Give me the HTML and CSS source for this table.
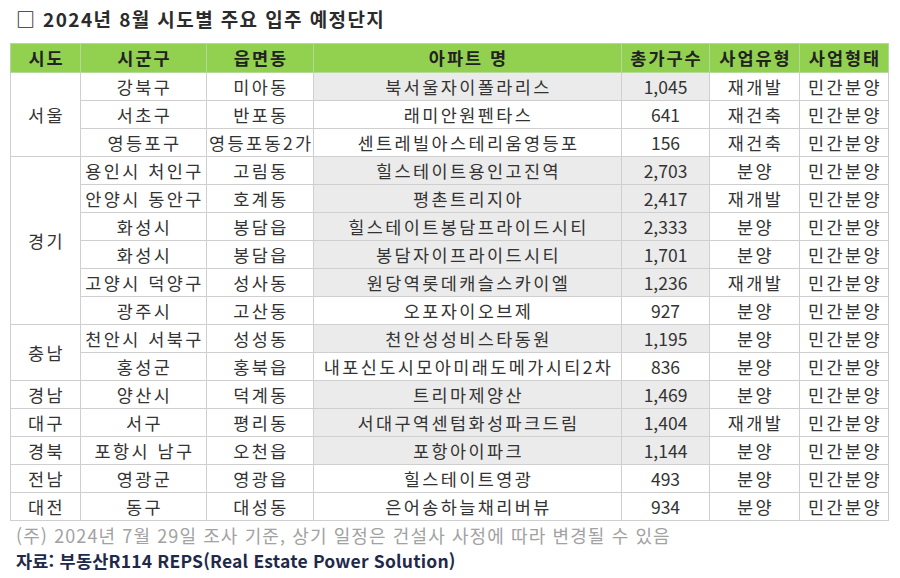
FILE: index.html
```html
<!DOCTYPE html>
<html lang="ko">
<head>
<meta charset="utf-8">
<link rel="stylesheet" href="styles.css">
</head>
<body>
<div class="page">
  <h1 class="title">□ 2024년 8월 시도별 주요 입주 예정단지</h1>
  <table class="grid">
    <colgroup>
      <col class="c1"><col class="c2"><col class="c3"><col class="c4"><col class="c5"><col class="c6"><col class="c7">
    </colgroup>
    <thead>
      <tr><th>시도</th><th>시군구</th><th>읍면동</th><th>아파트 명</th><th>총가구수</th><th>사업유형</th><th>사업형태</th></tr>
    </thead>
    <tbody>
      <tr><td rowspan="3">서울</td><td>강북구</td><td>미아동</td><td class="g">북서울자이폴라리스</td><td class="g n">1,045</td><td>재개발</td><td>민간분양</td></tr>
      <tr><td>서초구</td><td>반포동</td><td>래미안원펜타스</td><td class="n">641</td><td>재건축</td><td>민간분양</td></tr>
      <tr><td>영등포구</td><td>영등포동2가</td><td>센트레빌아스테리움영등포</td><td class="n">156</td><td>재건축</td><td>민간분양</td></tr>
      <tr><td rowspan="6">경기</td><td>용인시 처인구</td><td>고림동</td><td class="g">힐스테이트용인고진역</td><td class="g n">2,703</td><td>분양</td><td>민간분양</td></tr>
      <tr><td>안양시 동안구</td><td>호계동</td><td class="g">평촌트리지아</td><td class="g n">2,417</td><td>재개발</td><td>민간분양</td></tr>
      <tr><td>화성시</td><td>봉담읍</td><td class="g">힐스테이트봉담프라이드시티</td><td class="g n">2,333</td><td>분양</td><td>민간분양</td></tr>
      <tr><td>화성시</td><td>봉담읍</td><td class="g">봉담자이프라이드시티</td><td class="g n">1,701</td><td>분양</td><td>민간분양</td></tr>
      <tr><td>고양시 덕양구</td><td>성사동</td><td class="g">원당역롯데캐슬스카이엘</td><td class="g n">1,236</td><td>재개발</td><td>민간분양</td></tr>
      <tr><td>광주시</td><td>고산동</td><td>오포자이오브제</td><td class="n">927</td><td>분양</td><td>민간분양</td></tr>
      <tr><td rowspan="2">충남</td><td>천안시 서북구</td><td>성성동</td><td class="g">천안성성비스타동원</td><td class="g n">1,195</td><td>분양</td><td>민간분양</td></tr>
      <tr><td>홍성군</td><td>홍북읍</td><td>내포신도시모아미래도메가시티2차</td><td class="n">836</td><td>분양</td><td>민간분양</td></tr>
      <tr><td>경남</td><td>양산시</td><td>덕계동</td><td class="g">트리마제양산</td><td class="g n">1,469</td><td>분양</td><td>민간분양</td></tr>
      <tr><td>대구</td><td>서구</td><td>평리동</td><td class="g">서대구역센텀화성파크드림</td><td class="g n">1,404</td><td>재개발</td><td>민간분양</td></tr>
      <tr><td>경북</td><td>포항시 남구</td><td>오천읍</td><td class="g">포항아이파크</td><td class="g n">1,144</td><td>분양</td><td>민간분양</td></tr>
      <tr><td>전남</td><td>영광군</td><td>영광읍</td><td>힐스테이트영광</td><td class="n">493</td><td>분양</td><td>민간분양</td></tr>
      <tr><td>대전</td><td>동구</td><td>대성동</td><td>은어송하늘채리버뷰</td><td class="n">934</td><td>분양</td><td>민간분양</td></tr>
    </tbody>
  </table>
  <p class="note">(주) 2024년 7월 29일 조사 기준, 상기 일정은 건설사 사정에 따라 변경될 수 있음</p>
  <p class="source">자료: 부동산R114 REPS(Real Estate Power Solution)</p>
</div>
</body>
</html>
```
FILE: styles.css
```css
html, body {
  margin: 0;
  padding: 0;
  background: #ffffff;
}
body {
  font-family: "Noto Sans CJK KR", "Noto Sans", sans-serif;
  color: #333333;
}
.page {
  width: 900px;
  height: 578px;
  padding: 6px 0 0 10px;
  box-sizing: border-box;
}
.title {
  margin: 0 0 0 6px;
  height: 37px;
  font-size: 19px;
  line-height: 26px;
  letter-spacing: 1.4px;
  font-weight: 700;
  color: #2b2b2b;
}
.grid {
  border-collapse: collapse;
  table-layout: fixed;
  width: 878px;
  font-size: 17.5px;
  letter-spacing: 2.4px;
}
.c1 { width: 70px; }
.c2 { width: 126px; }
.c3 { width: 107px; }
.c4 { width: 308px; }
.c5 { width: 88px; }
.c6 { width: 90px; }
.c7 { width: 89px; }
.grid th,
.grid td {
  border: 1px solid #cfcfcf;
  text-align: center;
  padding: 0 0 0 2px;
  white-space: nowrap;
  overflow: hidden;
}
.grid th {
  background: #92d050;
  height: 28px;
  line-height: 26px;
  font-weight: 700;
  color: #222222;
  border-color: #b5d99a;
  letter-spacing: 2px;
}
.grid td {
  height: 27px;
  line-height: 26px;
}
.grid td.n {
  letter-spacing: 0;
  padding: 0;
}
.grid td.g {
  background: #ebebeb;
}
.note {
  margin: 2px 0 0 6px;
  font-size: 18px;
  line-height: 24px;
  letter-spacing: 1.1px;
  color: #a2a2a2;
}
.source {
  margin: 2px 0 0 6px;
  font-size: 17.5px;
  line-height: 24px;
  letter-spacing: 0.2px;
  font-weight: 700;
  color: #1f2a4a;
}
```
